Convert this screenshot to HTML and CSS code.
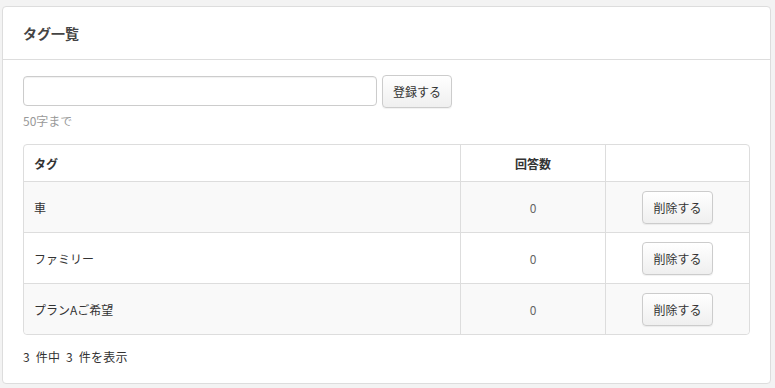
FILE: index.html
```html
<!DOCTYPE html>
<html lang="ja">
<head>
    <meta charset="UTF-8">
    <title>タグ一覧</title>
    <link rel="stylesheet" href="styles.css">
</head>
<body>
    <div class="panel">
        <div class="panel-head">タグ一覧</div>
        <div class="panel-body">
            <div class="form-row">
                <input type="text" class="tag-input">
                <button class="btn">登録する</button>
            </div>
            <p class="help">50字まで</p>

            <table class="tag-table">
                <thead>
                    <tr>
                        <th class="col-name">タグ</th>
                        <th class="col-count">回答数</th>
                        <th class="col-act"></th>
                    </tr>
                </thead>
                <tbody>
                    <tr>
                        <td>車</td>
                        <td class="num">0</td>
                        <td class="act"><button class="btn">削除する</button></td>
                    </tr>
                    <tr>
                        <td>ファミリー</td>
                        <td class="num">0</td>
                        <td class="act"><button class="btn">削除する</button></td>
                    </tr>
                    <tr>
                        <td>プランAご希望</td>
                        <td class="num">0</td>
                        <td class="act"><button class="btn">削除する</button></td>
                    </tr>
                </tbody>
            </table>

            <p class="count">3 件中 3 件を表示</p>
        </div>
    </div>
</body>
</html>
```

FILE: styles.css
```css
*{ margin: 0; padding: 0; box-sizing: border-box;}
body{ background: #f3f3f3; font-family: "Noto Sans CJK JP", "Liberation Sans", sans-serif; font-size: 12px; color: #333; padding: 6px 4px 4px 2px;}

.panel{ background: #fff; border: 1px solid #ddd; border-radius: 4px; height: 378px;}
.panel-head{ height: 53px; border-bottom: 1px solid #ddd; padding: 0 20px; display: flex; align-items: center; font-size: 14px; font-weight: bold; color: #444;}
.panel-body{ padding: 15px 20px 0;}

.form-row{ display: flex; align-items: flex-start;}
.tag-input{ width: 354px; height: 30px; margin-top: 1px; border: 1px solid #ccc; border-radius: 4px; box-shadow: inset 0 1px 1px rgba(0,0,0,.06);}

.btn{ height: 33px; padding: 0 10px; margin-left: 5px; font-family: inherit; font-size: 12px; color: #333; background: linear-gradient(#fff, #efefef); border: 1px solid #ccc; border-radius: 4px; box-shadow: 0 1px 1px rgba(0,0,0,.06);}

.help{ margin-top: 4px; line-height: 18px; color: #999;}

.tag-table{ width: 100%; margin-top: 14px; border-collapse: separate; border-spacing: 0; border: 1px solid #ddd; border-radius: 4px;}
.tag-table th, .tag-table td{ padding: 0 10px; text-align: left; border-left: 1px solid #ddd; border-top: 1px solid #ddd;}
.tag-table th:first-child, .tag-table td:first-child{ border-left: none;}
.tag-table thead th{ border-top: none; height: 36px; font-weight: bold;}
.tag-table tbody td{ height: 51px;}
.tag-table tbody tr:nth-child(odd) td{ background: #f9f9f9;}
.tag-table tbody tr:last-child td:first-child{ border-bottom-left-radius: 4px;}
.tag-table tbody tr:last-child td:last-child{ border-bottom-right-radius: 4px;}
.col-name{ width: 436px;}
.col-count{ width: 145px; text-align: center !important;}
.num{ text-align: center !important; color: #666;}
.act{ text-align: center !important;}
.act .btn{ margin-left: 0;}

.count{ margin-top: 13px; line-height: 18px; word-spacing: 3px; letter-spacing: .2px;}
```
